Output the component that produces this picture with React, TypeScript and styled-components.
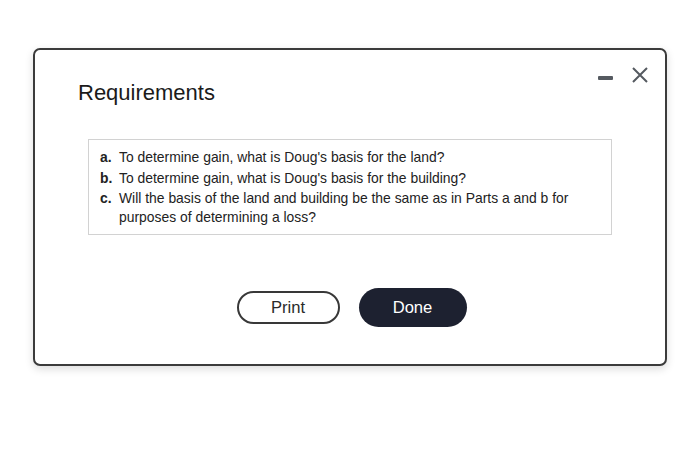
import * as React from 'react'
import styled, { createGlobalStyle } from 'styled-components'

const GlobalStyle = createGlobalStyle`
  body {
    margin: 0;
    background: #ffffff;
    font-family: 'Liberation Sans', Arial, sans-serif;
    color: #222;
  }
`

const Page = styled.div`
  width: 700px;
  height: 474px;
  padding: 48px 0 0 33px;
  box-sizing: border-box;
`

const Dialog = styled.div`
  width: 634px;
  height: 318px;
  box-sizing: border-box;
  border: 2px solid #3b3b3b;
  border-radius: 7px;
  background: #fff;
  box-shadow: 0 3px 8px rgba(0, 0, 0, 0.14);
  display: flex;
  flex-direction: column;
`

const Header = styled.div`
  display: flex;
  justify-content: space-between;
  align-items: flex-start;
  padding: 17px 17px 0 43px;
`

const Title = styled.h2`
  margin: 13px 0 0;
  font-size: 22px;
  line-height: 25px;
  font-weight: 400;
  color: #1b1b1b;
`

const Controls = styled.div`
  display: flex;
  align-items: center;
  gap: 19px;
  height: 16px;
`

const IconButton = styled.button<{ $drop?: number }>`
  border: 0;
  padding: 0;
  margin-top: ${p => p.$drop ?? 0}px;
  background: none;
  cursor: pointer;
  display: flex;
  color: #555a60;
`

const RequirementsBox = styled.ol`
  list-style: none;
  margin: 34px 53px 0;
  padding: 8px 12px 8px 11px;
  border: 1px solid #d2d2d2;
  font-size: 13.9px;
  line-height: 18.5px;
  color: #222;
`

const Item = styled.li`
  display: flex;
  & + & {
    margin-top: 2px;
  }
`

const Label = styled.span`
  flex: 0 0 19px;
  font-weight: 700;
`

const Actions = styled.div`
  display: flex;
  justify-content: center;
  align-items: center;
  gap: 19px;
  margin-top: 53px;
  padding-left: 3px;
`

const Button = styled.button<{ $primary?: boolean }>`
  box-sizing: border-box;
  width: ${p => (p.$primary ? '108px' : '103px')};
  height: ${p => (p.$primary ? '39px' : '33px')};
  border-radius: 20px;
  font-family: 'Liberation Sans', Arial, sans-serif;
  font-size: 16.6px;
  cursor: pointer;
  border: ${p => (p.$primary ? '0' : '2px solid #383838')};
  background: ${p => (p.$primary ? '#1d2130' : '#fff')};
  color: ${p => (p.$primary ? '#fff' : '#2a2a2a')};
`

const requirements = [
  ['a.', "To determine gain, what is Doug's basis for the land?"],
  ['b.', "To determine gain, what is Doug's basis for the building?"],
  ['c.', 'Will the basis of the land and building be the same as in Parts a and b for purposes of determining a loss?'],
]

const App = () => (
  <Page>
    <GlobalStyle />
    <Dialog>
      <Header>
        <Title>Requirements</Title>
        <Controls>
          <IconButton aria-label="minimize" $drop={5}>
            <svg width="15" height="4" viewBox="0 0 15 4">
              <rect width="15" height="4" rx="1" fill="currentColor" />
            </svg>
          </IconButton>
          <IconButton aria-label="close">
            <svg width="16" height="16" viewBox="0 0 16 16">
              <path d="M1 1L15 15M15 1L1 15" stroke="currentColor" strokeWidth="2" />
            </svg>
          </IconButton>
        </Controls>
      </Header>
      <RequirementsBox>
        {requirements.map(([label, text]) => (
          <Item key={label}>
            <Label>{label}</Label>
            <span>{text}</span>
          </Item>
        ))}
      </RequirementsBox>
      <Actions>
        <Button>Print</Button>
        <Button $primary>Done</Button>
      </Actions>
    </Dialog>
  </Page>
)

export default App
